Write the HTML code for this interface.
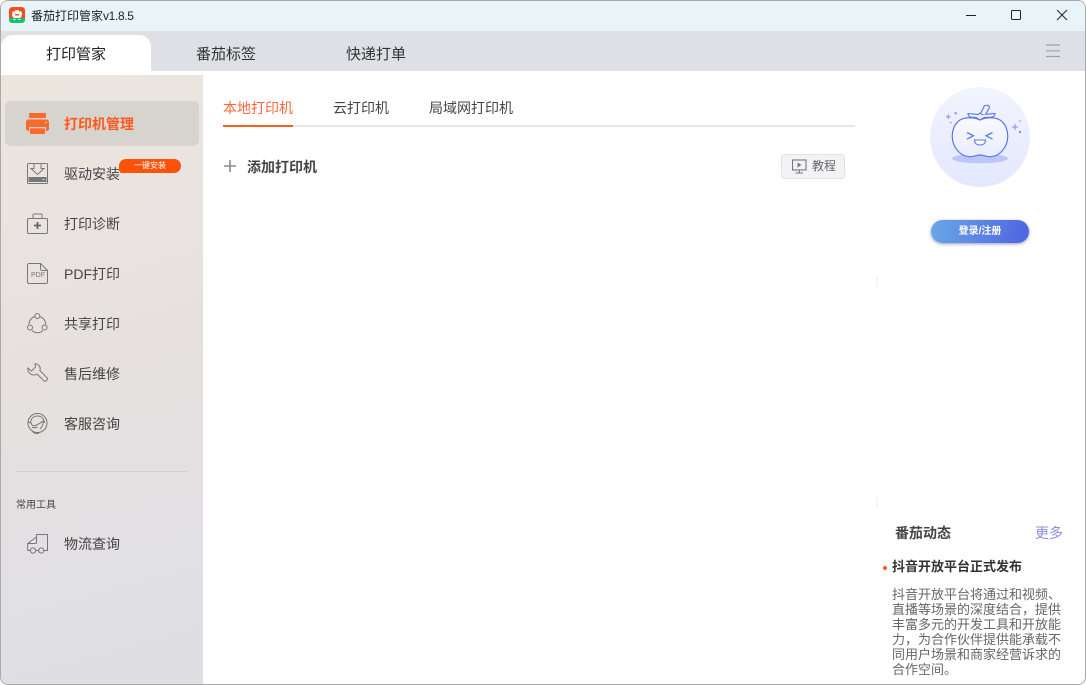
<!DOCTYPE html>
<html lang="zh">
<head>
<meta charset="utf-8">
<style>
*{box-sizing:border-box;margin:0;padding:0}
html,body{width:1086px;height:685px;overflow:hidden;background:#fff}
body{font-family:"Liberation Sans","Noto Sans CJK SC",sans-serif;color:#333}
.win{position:absolute;left:0;top:0;width:1086px;height:685px;background:#fff;border:1px solid #a9a9a9;border-radius:8px;overflow:hidden}
.a{position:absolute;white-space:nowrap}
.title{left:0;top:0;width:1084px;height:30px;background:#e8f4f7}
.tabs{left:0;top:30px;width:1084px;height:40px;background:#dee0e5}
.tab1{left:0;top:34px;width:150px;height:36px;background:#fff;border-radius:12px 12px 0 0}
.side{left:0;top:74px;width:202px;height:611px;background:linear-gradient(165deg,#ece6df 0%,#e6e1e0 45%,#dedfe3 100%)}
.sel{left:4px;top:100px;width:194px;height:45px;background:#d7d3cf;border-radius:6px}
.m{left:63px;font-size:14px;line-height:20px;color:#444}
.ico{position:absolute;left:26px;width:21px;height:21px;fill:none;stroke:#777;stroke-width:1}
.t{top:97px;font-size:14px;line-height:20px;color:#444}
.p{left:891px;width:170px;font-size:13px;line-height:15px;color:#666;white-space:normal}
</style>
</head>
<body>
<div class="win">
<div class="a title"></div>
<div class="a tabs"></div>
<div class="a tab1"></div>

<svg class="a" style="left:8px;top:6px" width="16" height="16" viewBox="0 0 16 16"><rect width="16" height="16" rx="3.500" fill="#fb4a1c"/><path d="M3.500 4.500c.8-.5 1.600-.3 2.200.3L6.500 3h3l.8 1.800c.6-.6 1.400-.8 2.200-.3.500 1 .5 3.500 0 5-.4 1-1.500 1.500-2.500 1.500H6c-1 0-2.100-.5-2.500-1.500-.5-1.500-.5-4 0-5z" fill="#fff"/><path d="M6 7h4v1.500H6z" fill="#fb4a1c"/><path d="M0 11h16v1.500A3.500 3.500 0 0 1 12.500 16h-9A3.500 3.500 0 0 1 0 12.500z" fill="#19c26f"/><path d="M4.500 12.500h2M9.500 12.500h2" stroke="#fff" stroke-width="1"/></svg>
<div class="a" style="left:30px;top:7px;font-size:12px;line-height:16px;color:#222">番茄打印管家<span style="letter-spacing:-.35px">v1.8.5</span></div>

<svg class="a" style="left:959px;top:4px" width="120" height="20" viewBox="0 0 120 20" fill="none" stroke="#222" stroke-width="1"><path d="M6 10.500h10"/><rect x="51.500" y="5.500" width="9" height="9" rx="1"/><path d="M97 5l10 10M107 5l-10 10"/></svg>

<div class="a" style="left:45px;top:44px;font-size:15px;line-height:20px;color:#222">打印管家</div>
<div class="a" style="left:195px;top:44px;font-size:15px;line-height:20px;color:#333">番茄标签</div>
<div class="a" style="left:345px;top:44px;font-size:15px;line-height:20px;color:#333">快递打单</div>
<svg class="a" style="left:1045px;top:43px" width="15" height="14" fill="none" stroke="#9fa1a6" stroke-width="1.200"><path d="M0 1h14M0 6.800h14M0 12.500h14"/></svg>

<div class="a side"></div>
<div class="a sel"></div>

<svg class="a" style="left:25px;top:112px" width="23" height="21" viewBox="0 0 23 21"><rect x="3" y="0" width="17" height="5" rx="1" fill="#fb6a2c"/><rect x="0" y="6.500" width="23" height="11.500" rx="2.500" fill="#fb6a2c"/><rect x="3" y="14" width="17" height="6" fill="#d7d3cf"/><rect x="4" y="15.300" width="15" height="5.700" rx="1" fill="#fb6a2c"/><circle cx="20" cy="9.500" r=".8" fill="#fdd3bf"/></svg>
<div class="a m" style="top:113px;font-weight:bold;color:#fb5a1e">打印机管理</div>

<svg class="ico" style="top:162px" viewBox="0 0 21 21"><path d="M6.500 .5H1.500a1 1 0 0 0-1 1v18a1 1 0 0 0 1 1h18a1 1 0 0 0 1-1v-18a1 1 0 0 0-1-1h-5"/><path d="M7 .5v5H4l6.500 6 6.500-6h-3v-5z"/><rect x="1.500" y="14" width="18" height="5" fill="#777" stroke="none"/><rect x="15.500" y="16" width="2" height="1" fill="#ddd" stroke="none"/></svg>
<div class="a m" style="top:163px">驱动安装</div>
<div class="a" style="left:118px;top:158px;width:62px;height:14px;background:#fd5208;border-radius:7px 7px 7px 3px;color:#fff;font-size:8px;line-height:14px;text-align:center">一键安装</div>

<svg class="ico" style="top:212px" viewBox="0 0 21 21"><rect x=".5" y="5.500" width="20" height="15" rx="1"/><path d="M6 5.500V2a1 1 0 0 1 1-1h7a1 1 0 0 1 1 1v3.500"/><path d="M10.500 9v7M7 12.500h7" stroke="#666" stroke-width="1.800"/></svg>
<div class="a m" style="top:213px">打印诊断</div>

<svg class="ico" style="top:262px" viewBox="0 0 21 21"><path d="M13.500 .5H2A1.500 1.500 0 0 0 .5 2v17A1.500 1.500 0 0 0 2 20.500h17a1.500 1.500 0 0 0 1.500-1.500V7.500zM13.500 .5v5a2 2 0 0 0 2 2h5"/></svg>
<div class="a" style="left:30px;top:271px;font-size:7px;line-height:8px;color:#777">PDF</div>
<div class="a m" style="top:263px">PDF打印</div>

<svg class="ico" style="top:312px" viewBox="0 0 21 21"><circle cx="10.300" cy="3" r="2.500"/><circle cx="3" cy="14.500" r="2.500"/><circle cx="17.600" cy="14.500" r="2.500"/><path d="M7.500 3.500A9.500 9.500 0 0 0 1.800 11.500M13 3.500A9.500 9.500 0 0 1 18.800 11.500M5 17.500C8 20.500 13 20.500 15.800 17.500"/></svg>
<div class="a m" style="top:313px">共享打印</div>

<svg class="ico" style="top:362px" viewBox="0 0 21 21"><path d="M8 .8C10.500 .8 13 2.500 13.200 5.300c0 .8-.1 1.600-.3 2.200L20 14.800c1.200 1.400-1.200 4.500-2.800 3.200l-7-6.800C8 12.500 5 12.300 3 10.500 1.200 9 .6 7 .8 5l3.700 3.100L8.500 4z"/></svg>
<div class="a m" style="top:363px">售后维修</div>

<svg class="ico" style="top:412px" viewBox="0 0 21 21"><circle cx="10.500" cy="10" r="9.500"/><path d="M3.500 10C4 5 7 3 10.500 3s6.500 2 7 7"/><path d="M1.500 9.500c1.500-.5 2.500 0 3 1.500.5 1.800 2 2.300 4 1.500 3-1.200 5-3 8-4.500-.3 3.500-1.500 6-3.500 8"/><path d="M5 14.500c2 .5 3.500.5 5.500-.5M5 17.500c1 2.500 3 3.200 6 3"/><circle cx="11" cy="20" r="1.100" fill="#777" stroke="none"/></svg>
<div class="a m" style="top:413px">客服咨询</div>

<div class="a" style="left:16px;top:470px;width:170px;height:1px;background:#d0cfcf"></div>
<div class="a" style="left:15px;top:498px;font-size:10px;line-height:13px;color:#444">常用工具</div>

<svg class="ico" style="top:533px" viewBox="0 0 21 21"><path d="M9.500 .5H20.500V16.500H17M11.500 16.500H8.800M3.200 16.500H.7V9.500L9.500 3M.7 9.500H9.500M9.500 .5V9.500"/><circle cx="6" cy="16.500" r="2.600"/><circle cx="14.300" cy="16.500" r="2.600"/></svg>
<div class="a m" style="top:533px">物流查询</div>

<div class="a t" style="left:222px;color:#f9683a">本地打印机</div>
<div class="a t" style="left:332px">云打印机</div>
<div class="a t" style="left:428px">局域网打印机</div>
<div class="a" style="left:222px;top:124px;width:632px;height:2px;background:#e4e6ec"></div>
<div class="a" style="left:222px;top:124px;width:70px;height:2px;background:#fb5f20"></div>

<svg class="a" style="left:223px;top:159px" width="12" height="12" fill="none" stroke="#8c8c8c" stroke-width="1.600"><path d="M0 6h12M6 0v12"/></svg>
<div class="a" style="left:246px;top:156px;font-size:14px;line-height:20px;font-weight:bold;color:#444">添加打印机</div>

<div class="a" style="left:780px;top:153px;width:64px;height:25px;background:#f3f3f5;border:1px solid #e2e3e8;border-radius:4px"></div>
<svg class="a" style="left:791px;top:158px" width="15" height="15" fill="none" stroke="#777" stroke-width="1.100"><rect x=".5" y="1" width="13.500" height="10"/><path d="M7.250 11v3M3.500 14h7.500"/><path d="M5.500 3.500l4 2.500-4 2.500z" fill="#777" stroke="none"/></svg>
<div class="a" style="left:811px;top:156px;font-size:12px;line-height:18px;color:#666">教程</div>

<div class="a" style="left:875px;top:276px;width:2px;height:10px;background:#f4f5f7"></div>
<div class="a" style="left:875px;top:496px;width:2px;height:10px;background:#f4f5f7"></div>

<svg class="a" style="left:929px;top:86px" width="101" height="101" viewBox="0 0 101 101">
<defs><linearGradient id="g" x1="0" y1="0" x2="0" y2="1"><stop offset="0" stop-color="#f2f4fe"/><stop offset="1" stop-color="#e4e8fd"/></linearGradient>
<linearGradient id="f" x1="0" y1="0" x2="0" y2="1"><stop offset="0" stop-color="#f9faff"/><stop offset="1" stop-color="#e9edfd"/></linearGradient></defs>
<circle cx="50" cy="50" r="50" fill="url(#g)"/>
<ellipse cx="50" cy="71.500" rx="28" ry="4.800" fill="#bcc6f8"/>
<path d="M50 33C44 30 35 30 30 33 24 37 22 44 22.300 50 22.500 60 30 69 39 69.700 43 70 47 68 50 68 53 68 57 70 61 69.700 70 69 77.500 60 77.700 50 78 44 76 37 70 33 65 30 56 30 50 33Z" fill="url(#f)" stroke="#5a76ea" stroke-width="1.200"/>
<path d="M38 26.500L48 27.500 50 26 52 27.500 65 26.500C65 29 63 30 61 30.200L54 30.500 50 33 46 30.500 41 30.200C39.500 30 38 28.500 38 26.500Z" fill="#eef1fe" stroke="#5a76ea" stroke-width="1.100"/>
<path d="M50.500 27L54 19.500C55 17.500 60 18 59.500 20.500L55.500 27.500" fill="#eef1fe" stroke="#5a76ea" stroke-width="1.100"/>
<path d="M37 45.500l6.500 3.300-6.500 3.300M62.500 45.500l-6.500 3.300 6.500 3.300" fill="none" stroke="#5a76ea" stroke-width="1.300"/>
<path d="M44.500 53h11c0 3.500-2.500 5-5.500 5s-5.500-1.500-5.500-5z" fill="#fff" stroke="#5a76ea" stroke-width="1.100"/>
<path d="M30 37c-2 1-3 3-3.500 5" fill="none" stroke="#fff" stroke-width="1.500"/>
<path d="M18.300 27.500v4.500M16 29.700h4.600M85 37v6M82 40h6" stroke="#7b92ef" stroke-width="1"/>
<circle cx="25.700" cy="26.300" r="1.200" fill="#7b92ef"/><circle cx="20.700" cy="35.700" r=".8" fill="#7b92ef"/><circle cx="90" cy="34" r=".8" fill="#7b92ef"/><circle cx="90" cy="45" r="1.200" fill="#7b92ef"/>
</svg>

<div class="a" style="left:930px;top:219px;width:98px;height:23px;border-radius:12px;background:linear-gradient(100deg,#68a8e8,#4f62e2);box-shadow:0 1px 3px rgba(70,70,120,.55);color:#fff;font-size:10px;font-weight:bold;line-height:24px;text-align:center">登录/注册</div>

<div class="a" style="left:894px;top:522px;font-size:14px;line-height:20px;font-weight:bold;color:#444">番茄动态</div>
<div class="a" style="left:1034px;top:522px;font-size:14px;line-height:20px;color:#8b90df">更多</div>
<div class="a" style="left:882px;top:565px;width:4px;height:4px;border-radius:50%;background:#fb5f20"></div>
<div class="a" style="left:891px;top:556px;font-size:13px;line-height:20px;font-weight:bold;color:#333">抖音开放平台正式发布</div>
<div class="a p" style="top:586px">抖音开放平台将通过和视频、<br>直播等场景的深度结合，提供<br>丰富多元的开发工具和开放能<br>力，为合作伙伴提供能承载不<br>同用户场景和商家经营诉求的<br>合作空间。</div>
</div>
</body>
</html>
